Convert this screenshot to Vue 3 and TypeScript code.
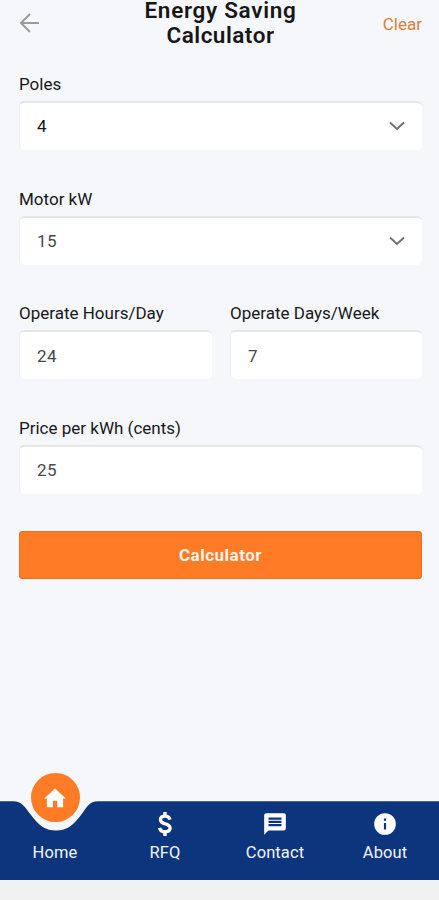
<script setup lang="ts">
import { reactive, ref } from 'vue'

const form = reactive({ poles: '4', motor: '15', hours: '24', days: '7', price: '25' })
const active = ref('Home')
const tabs = ['Home', 'RFQ', 'Contact', 'About']

function clearForm(): void {
  form.hours = ''
  form.days = ''
  form.price = ''
}
</script>

<template>
  <div class="screen">
    <header class="header">
      <button class="back" aria-label="Back">
        <svg width="22" height="20" viewBox="0 0 22 20"><path d="M11 1 2 10l9 9M2 10h18" /></svg>
      </button>
      <h1><span class="first-line">Energy Saving</span><span class="second-line">Calculator</span></h1>
      <button class="clear" @click="clearForm">Clear</button>
    </header>

    <main class="form">
      <div class="field">
        <label>Poles</label>
        <button class="control dark">
          <span>{{ form.poles }}</span>
          <svg width="16" height="10" viewBox="0 0 16 10"><path d="m1 1.500 7 6.500 7-6.500" /></svg>
        </button>
      </div>
      <div class="field">
        <label>Motor kW</label>
        <button class="control">
          <span>{{ form.motor }}</span>
          <svg width="16" height="10" viewBox="0 0 16 10"><path d="m1 1.500 7 6.500 7-6.500" /></svg>
        </button>
      </div>
      <div class="pair">
        <div class="field">
          <label for="hours">Operate Hours/Day</label>
          <input id="hours" v-model="form.hours" class="control number" />
        </div>
        <div class="field">
          <label for="days">Operate Days/Week</label>
          <input id="days" v-model="form.days" class="control number" />
        </div>
      </div>
      <div class="field">
        <label for="price">Price per kWh (cents)</label>
        <input id="price" v-model="form.price" class="control" />
      </div>
      <button class="submit">Calculator</button>
    </main>

    <nav class="nav">
      <svg class="nav-shape" viewBox="0 0 439 80" preserveAspectRatio="none">
        <path d="M0 1.200H13C22 1.200 25 7 31 15C39 26 46 30.500 56 30.500S73 26 81 15C87 7 89 1.200 98 1.200H439V80H0Z" />
      </svg>
      <button v-for="tab in tabs" :key="tab" class="tab" @click="active = tab">
        <span class="icon" :class="{ bubble: tab === 'Home' }">
          <svg v-if="tab === 'Home'" width="26" height="26" viewBox="0 0 24 24"><path d="M10 20.500v-6h4v6h5.500v-8H22L12 3.200 2 12.500h2.500v8z" /></svg>
          <svg v-else-if="tab === 'RFQ'" width="16" height="26" viewBox="0 0 16 26"><path class="dollar" d="M13 8.700C12.400 6.300 10.700 5.100 8 5.100c-2.800 0-4.500 1.400-4.500 3.600 0 5.400 9.600 3 9.600 8.400 0 2.400-2 3.700-4.900 3.700-3 0-5-1.400-5.600-4M8 1v4M8 21v4" /></svg>
          <svg v-else-if="tab === 'Contact'" width="26" height="26" viewBox="0 0 24 24"><path fill-rule="evenodd" d="M4 2h16a2 2 0 0 1 2 2v12a2 2 0 0 1-2 2H6l-4 4V4a2 2 0 0 1 2-2zm2 4v2h12V6zm0 3v2h12V9zm0 3v2h12v-2z" /></svg>
          <svg v-else width="26" height="26" viewBox="0 0 24 24"><path fill-rule="evenodd" d="M12 2a10 10 0 1 0 0 20 10 10 0 0 0 0-20zm-1 5h2v2h-2zm0 4h2v6h-2z" /></svg>
        </span>
        <span class="tab-label">{{ tab }}</span>
      </button>
    </nav>
  </div>
</template>

<style>
body { margin: 0; overflow: hidden; background: #f1f1f1; }
</style>

<style scoped>
* { box-sizing: border-box; }
.screen {
  height: 900px;
  display: flex;
  flex-direction: column;
  background: #f5f7fb;
  border-bottom: 20px solid #f1f1f1;
  font-family: Roboto, sans-serif;
  color: #171719;
}
button, input { font: inherit; color: inherit; border: 0; background: none; padding: 0; margin: 0; }
.header {
  height: 74px;
  padding: 0 17px 0 19px;
  display: grid;
  grid-template-columns: 60px 1fr 60px;
  align-items: start;
}
.back { height: 20px; margin-top: 13px; text-align: left; }
.back svg { display: block; fill: none; stroke: #9b9c9e; stroke-width: 2; }
h1 {
  margin: 0;
  font-size: 22.5px;
  font-weight: 600;
  text-align: center;
}
h1 span { display: block; }
.first-line { line-height: 20px; letter-spacing: 0.7px; }
.second-line { line-height: 30px; letter-spacing: 0.5px; }
.clear { margin-top: 14px; height: 20px; line-height: 20px; font-size: 17px; text-align: right; color: #da8038; }
.form { flex: 1; padding: 0 17px 0 19px; display: flex; flex-direction: column; }
.field { height: 114.7px; flex: none; }
.field label { display: block; height: 20px; line-height: 20px; margin-bottom: 7px; font-size: 17px; white-space: nowrap; }
.control {
  display: flex;
  align-items: center;
  justify-content: space-between;
  width: 100%;
  height: 49px;
  padding: 0 17px 1px 17px;
  border-top: 2px solid #e5e6e8;
  border-left: 1px solid #eceef1;
  border-radius: 5px;
  background: #fff;
  font-size: 17px;
  letter-spacing: 0.4px;
  color: #48494b;
  outline: none;
}
.control.number { padding-bottom: 0; }
.control.dark { padding-bottom: 2px; color: #171719; }
.control svg { fill: none; stroke: #6c6d70; stroke-width: 1.8; }
.pair { display: grid; grid-template-columns: 193px 192px; gap: 18px; }
.submit {
  flex: none;
  height: 48px;
  margin-top: -2px;
  border-radius: 4px;
  background: #ff7b26;
  box-shadow: inset 0 0 0 1px #f2701c;
  color: #fff4e9;
  font-size: 17px;
  font-weight: 700;
  letter-spacing: 0.5px;
}
.nav { position: relative; height: 80px; display: grid; grid-template-columns: repeat(4, 110px); }
.nav-shape { position: absolute; inset: 0; width: 100%; height: 80px; fill: #0c357d; }
.tab { position: relative; display: flex; flex-direction: column; align-items: center; color: #f1f5fc; }
.icon { height: 26px; margin-top: 11px; display: flex; align-items: center; justify-content: center; }
.icon svg { display: block; fill: #fff; }
.bubble { width: 49px; height: 49px; margin-top: -27px; margin-bottom: 15px; border-radius: 50%; background: #ff7b26; }
.icon .dollar { fill: none; stroke: #fff; stroke-width: 3.400; }
.tab-label { line-height: 20px; margin-top: 6px; font-size: 16.5px; letter-spacing: 0.1px; }
</style>
